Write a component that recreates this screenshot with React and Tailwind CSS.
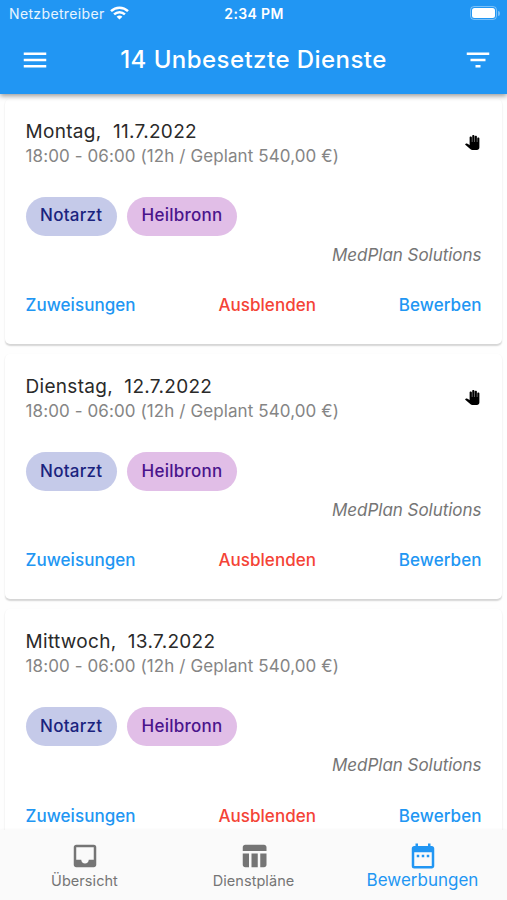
import { MdMenu, MdFilterList, MdInbox, MdDateRange } from 'react-icons/md';

const shifts = [
    { day: 'Montag', date: '11.7.2022', raised: true },
    { day: 'Dienstag', date: '12.7.2022', raised: true },
    { day: 'Mittwoch', date: '13.7.2022', raised: false },
];

function StatusBar() {
    return (
        <div className="h-[25px] pt-[2px] grid grid-cols-3 items-center pl-[9px] pr-[7px] text-white">
            <div className="flex items-center gap-[6px] -mt-px">
                <span className="text-[14px] tracking-[0.36px] text-white/90">Netzbetreiber</span>
                <svg className="w-[19px] h-[14px] shrink-0 -ml-px" viewBox="0 0 19 14" fill="none" stroke="currentColor" strokeWidth="2.5">
                    <path d="M1 5.2C5.8.6 13.2.6 18 5.2" />
                    <path d="M4.1 8.4c3.1-2.9 7.700-2.900 10.800 0" />
                    <path d="M9.500 13.500L6.600 10.700c1.700-1.500 4.100-1.500 5.800 0z" fill="currentColor" stroke="none" />
                </svg>
            </div>
            <span className="text-[14px] font-semibold tracking-[0.35px] text-center -ml-px">2:34 PM</span>
            <div className="flex justify-end items-center gap-px -mt-px">
                <div className="w-[27px] h-[14px] rounded-[4px] border border-white/40 p-px">
                    <div className="h-full rounded-[2.500px] bg-white"></div>
                </div>
                <div className="w-[2px] h-[5px] rounded-r-full bg-white/40"></div>
            </div>
        </div>
    );
}

function Header() {
    return (
        <header className="relative z-10 h-[94px] shrink-0 bg-[#2196f3] shadow-[0_2px_5px_rgba(0,0,0,0.4)]">
            <StatusBar />
            <div className="h-[69px] flex items-center justify-between pl-5 pr-[14px] text-white">
                <MdMenu className="size-[30px]" aria-label="Menu" />
                <h1 className="text-[24px] font-medium tracking-[0.45px] whitespace-nowrap mr-[6px]">14 Unbesetzte Dienste</h1>
                <MdFilterList className="size-[30px]" aria-label="Filter" />
            </div>
        </header>
    );
}

function HandIcon() {
    return (
        <svg className="size-[15px] mt-[15px] mr-[1.500px] text-black" viewBox="0 0 24 24" fill="currentColor">
            <path d="M23 5.500V20c0 2.200-1.800 4-4 4h-7.300c-1.080 0-2.100-.430-2.850-1.190L0 15.330s1.260-1.730 1.800-1.750c.4-.1.8-.1 1.290.21.300.1 4.310 2.460 4.310 2.460V4c0-.830.67-1.500 1.500-1.500S11 3.170 11 4v7h.6V1.500c0-.830.67-1.500 1.700-1.500S15 .67 15 1.500V11h.6V2.500c0-.830.67-1.500 1.700-1.500s1.700.67 1.700 1.500V11h.6V5.500c0-.830.67-1.500 1.700-1.500s1.700.67 1.700 1.500z" />
        </svg>
    );
}

function ShiftCard({ shift }) {
    return (
        <div className="h-[245.400px] shrink-0 rounded-[5px] bg-white pl-[20.500px] pr-[20.500px] pt-[21px] shadow-[0_1.500px_1.500px_rgba(0,0,0,0.16)]">
            <div className="flex justify-between">
                <div>
                    <p className="h-[24px] leading-[24px] text-[19px] tracking-[0.31px] text-[#2a2a2a] whitespace-pre">{shift.day},  {shift.date}</p>
                    <p className="h-[26px] leading-[25px] text-[17px] tracking-[0.1px] text-[#858585] whitespace-nowrap">18:00 - 06:00 (12h / Geplant 540,00 €)</p>
                </div>
                {shift.raised && <HandIcon />}
            </div>
            <div className="flex gap-[10px] mt-[27px]">
                <span className="h-[39px] w-[91.500px] flex items-center justify-center rounded-full bg-[#c5cae9] text-[#1a237e] text-[17px] font-medium tracking-[0.250px]">Notarzt</span>
                <span className="h-[39px] w-[110px] flex items-center justify-center rounded-full bg-[#e1bee7] text-[#4a148c] text-[17px] font-medium tracking-[0.250px]">Heilbronn</span>
            </div>
            <p className="mt-[8px] h-[24px] leading-[23px] text-right text-[17px] -tracking-[0.030px] italic text-[#757575]">MedPlan Solutions</p>
            <div className="flex justify-between items-center mt-[26px] h-[24px] text-[17px] font-medium tracking-[0.050px]">
                <button className="text-[#2196f3]">Zuweisungen</button>
                <button className="text-[#f44336]">Ausblenden</button>
                <button className="text-[#2196f3]">Bewerben</button>
            </div>
        </div>
    );
}

function BottomNav() {
    return (
        <nav className="relative z-10 h-[70px] shrink-0 grid grid-cols-3 bg-[#fafafa] text-[#757575] shadow-[0_0_3px_rgba(0,0,0,0.05)]">
            <div className="flex flex-col items-center pt-[11px]">
                <MdInbox className="size-[30px]" />
                <span className="text-[14.500px] leading-[20px] tracking-[0.050px]">Übersicht</span>
            </div>
            <div className="flex flex-col items-center pt-[11px]">
                <svg className="size-[30px]" viewBox="0 0 24 24" fill="currentColor">
                    <path d="M10 10.020h5V21h-5zM17 21h3c1.100 0 2-.9 2-2v-9h-5v11zm3-18H5c-1.100 0-2 .9-2 2v3h19V5c0-1.100-.9-2-2-2zM3 19c0 1.100.9 2 2 2h3V10H3v9z" />
                </svg>
                <span className="text-[14.500px] leading-[20px] tracking-[0.050px]">Dienstpläne</span>
            </div>
            <div className="flex flex-col items-center pt-[11px] text-[#2196f3]">
                <MdDateRange className="size-[30px]" />
                <span className="text-[17px] leading-[19px]">Bewerbungen</span>
            </div>
        </nav>
    );
}

export default function App() {
    return (
        <div className="h-screen w-full flex flex-col overflow-hidden bg-[#fefefe] font-['Inter',sans-serif]">
            <Header />
            <main className="flex-1 min-h-0 overflow-hidden flex flex-col gap-[10px] px-[5px] pt-[4.600px]">
                {shifts.map((shift) => (
                    <ShiftCard key={shift.date} shift={shift} />
                ))}
            </main>
            <BottomNav />
        </div>
    );
}
